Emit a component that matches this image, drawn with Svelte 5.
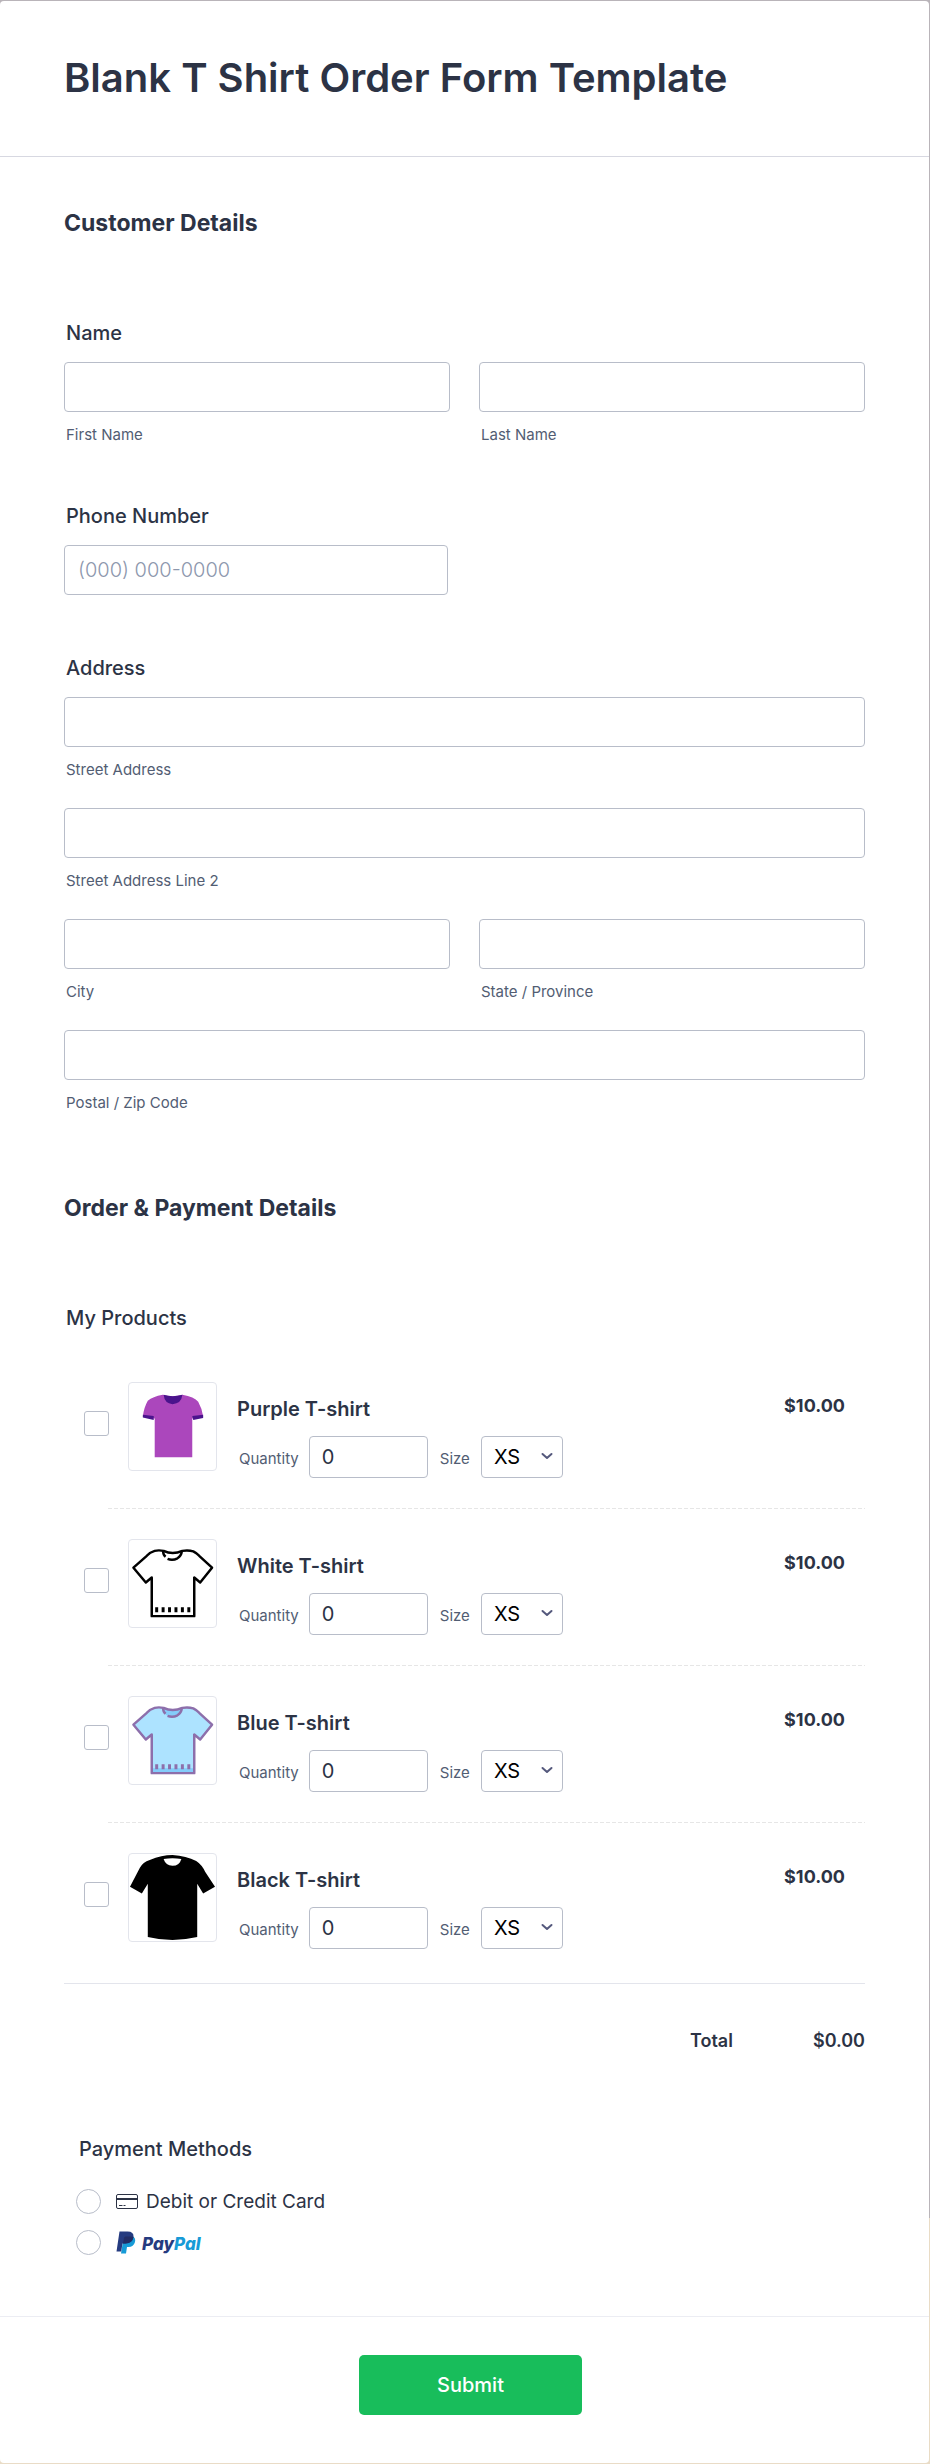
<script>
    const sizes = ["XS", "S", "M", "L", "XL"];
    let products = $state([
        { id: "purple", name: "Purple T-shirt", price: 10, picked: false, qty: "0", size: "XS" },
        { id: "white", name: "White T-shirt", price: 10, picked: false, qty: "0", size: "XS" },
        { id: "blue", name: "Blue T-shirt", price: 10, picked: false, qty: "0", size: "XS" },
        { id: "black", name: "Black T-shirt", price: 10, picked: false, qty: "0", size: "XS" }
    ]);
    let payment = $state("");

    let total = $derived(
        products.reduce((sum, p) => sum + (p.picked ? p.price * (Number(p.qty) || 0) : 0), 0)
    );

    function money(n) {
        return "$" + n.toFixed(2);
    }
</script>

{#snippet field(id, label)}
    <div class="field">
        <input class="box" type="text" {id}>
        <label class="sub" for={id}>{label}</label>
    </div>
{/snippet}

{#snippet outlineShirt(line, fill, shade)}
    <path d="M28 10.5 L35 11 Q44 16.5 54 11 L61 10.5 Q66 11 70 14 L84 28 L73 43 L66 38 V78 H23 V38 L16 43 L4 28 L20 14 Q24 10.5 28 10.5 Z" fill={fill} />
    <path d="M34 11 Q44 16 54 11 Q53 20 44 20.5 Q36 20 34 11 Z M23 72 H66 V78 H23 Z" fill={shade} />
    <g fill="none" stroke={line} stroke-width="2.5" stroke-linejoin="round">
        <path d="M26 11 Q30 10 35 11 Q44 15.5 54 11 Q60 10 65 11.5 Q69 13.5 71 16 L84 28 L72 43 L66 38 V77 H23 V38 L17 43 L4.5 28 L18 16 Q21 12.5 26 11 Z" />
        <path d="M34.5 11 Q34.5 15 37 17 M39 19 Q44 21 49 18.5 Q53 16 53.5 11" />
        <path stroke-width="3" d="M28 68 v5 M34.5 68 v5 M41 68 v5 M47.5 68 v5 M54 68 v5 M60.5 68 v5" />
    </g>
{/snippet}

<main class="card">
    <header>
        <h1>Blank T Shirt Order Form Template</h1>
    </header>

    <form onsubmit={(e) => e.preventDefault()}>
        <div class="content">
            <h2>Customer Details</h2>

            <fieldset>
                <legend>Name</legend>
                <div class="grid">
                    {@render field("first", "First Name")}
                    {@render field("last", "Last Name")}
                </div>
            </fieldset>

            <div class="group">
                <label class="title" for="phone">Phone Number</label>
                <input class="box phone" type="tel" id="phone" placeholder="(000) 000-0000">
            </div>

            <fieldset>
                <legend>Address</legend>
                <div class="grid">
                    <div class="wide">{@render field("street", "Street Address")}</div>
                    <div class="wide">{@render field("street2", "Street Address Line 2")}</div>
                    {@render field("city", "City")}
                    {@render field("state", "State / Province")}
                    <div class="wide">{@render field("zip", "Postal / Zip Code")}</div>
                </div>
            </fieldset>

            <h2 class="second">Order &amp; Payment Details</h2>

            <fieldset>
                <legend>My Products</legend>
                <ul class="products">
                    {#each products as p}
                        <li>
                            <div class="product">
                                <input class="tick" type="checkbox" id={p.id} bind:checked={p.picked}>
                                <svg class="thumb" viewBox="0 0 88 88" aria-hidden="true">
                                    {#if p.id === "purple"}
                                        <path d="M34 12 Q44 15 54 12 Q66 14 70 19 Q74 26 75 34 L64 36 V75 H26 V36 L14 34 Q15 25 19 18 Q24 14 34 12 Z" fill="#ab47bc" />
                                        <path d="M35 12 Q44 15 54 12 Q53 21 44 21.5 Q36 21 35 12 Z M14 32 L25 33.5 V37.5 L14 35 Z M64 33.5 L75 32 V35.5 L65 37.5 Z" fill="#4a148c" />
                                    {:else if p.id === "white"}
                                        {@render outlineShirt("#000", "#fff", "#fff")}
                                    {:else if p.id === "blue"}
                                        {@render outlineShirt("#8d6fab", "#ade3ff", "#84ccfa")}
                                    {:else}
                                        <path d="M44 1 Q58 2 68 7 Q74 11 77 18 L87 33 L75 40 L69 30 V84 Q56 87 44 87 Q31 87 19 84 V30 L13 40 L1 33 L11 14 Q14 8 21 6 Q33 1 44 1 Z" fill="#000" />
                                        <path d="M35 5 Q44 3.5 53 5 Q51 12 44 12 Q37 11.5 35 5 Z" fill="#fff" />
                                    {/if}
                                </svg>
                                <div class="info">
                                    <label class="name" for={p.id}>{p.name}</label>
                                    <div class="options">
                                        <label for="{p.id}-qty">Quantity</label>
                                        <input class="qty" type="text" inputmode="numeric" id="{p.id}-qty" bind:value={p.qty}>
                                        <label for="{p.id}-size">Size</label>
                                        <div class="select">
                                            <select id="{p.id}-size" bind:value={p.size}>
                                                {#each sizes as s}
                                                    <option value={s}>{s}</option>
                                                {/each}
                                            </select>
                                            <svg viewBox="0 0 12 8" aria-hidden="true"><path d="M1.5 2 L6 6 L10.5 2" fill="none" stroke="#55597d" stroke-width="2" stroke-linecap="round" stroke-linejoin="round" /></svg>
                                        </div>
                                    </div>
                                </div>
                                <span class="price">{money(p.price)}</span>
                            </div>
                        </li>
                    {/each}
                </ul>
                <div class="total">
                    <span>Total</span>
                    <span>{money(total)}</span>
                </div>
            </fieldset>

            <fieldset class="payment">
                <legend>Payment Methods</legend>
                <label class="method">
                    <input type="radio" name="payment" value="card" bind:group={payment}>
                    <svg class="cardicon" viewBox="0 0 22 15" aria-hidden="true">
                        <rect x="0.5" y="0.5" width="21" height="14" rx="1.5" fill="#fff" stroke="#2c3345" />
                        <path d="M0.5 5 H21.5" stroke="#2c3345" stroke-width="2" />
                        <path d="M3 11.5 H6.5 M7.5 11.5 H9.5" stroke="#2c3345" />
                    </svg>
                    <span>Debit or Credit Card</span>
                </label>
                <label class="method">
                    <input type="radio" name="payment" value="paypal" bind:group={payment}>
                    <svg class="ppicon" viewBox="0 0 20 23" aria-hidden="true">
                        <path d="M16.5 5 Q20 7 19 11 Q17.5 16 12.5 16 H11 L10 22.5 H5 L7.5 7 Z" fill="#179bd7" />
                        <path d="M3.5 0.5 H11.5 Q18 0.5 17.500 6 Q16.500 12 9.500 12.500 H6.500 L5.200 20.500 H0.500 Z" fill="#253b80" />
                        <path d="M8 7 Q8.2 5.500 9.500 5.500 H14 Q16.500 5.500 17.500 6 Q16.500 12 9.500 12.500 H7 Z" fill="#222d65" />
                    </svg>
                    <span class="paypal">Pay<span>Pal</span></span>
                </label>
            </fieldset>
        </div>

        <footer>
            <button type="submit">Submit</button>
        </footer>
    </form>
</main>

<style>
    :global(body) {
        background: linear-gradient(#b9b4b9 90%, #e9dcc6 90%);
        font-family: Inter, "Liberation Sans", sans-serif;
        color: #2c3345;
    }

    * {
        box-sizing: border-box;
    }

    input, select, button {
        font-family: inherit;
        margin: 0;
    }

    .card {
        margin: 1px 1px 1px 0;
        background: #fff;
        border-radius: 4px;
    }

    header {
        padding: 53px 64px 54px;
        border-bottom: 1px solid #d7d8e1;
    }
    h1 {
        margin: 0;
        font-size: 40px;
        line-height: 48px;
        font-weight: 600;
    }

    .content {
        padding: 50px 64px 61px;
    }
    h2 {
        margin: 0 0 82px;
        font-size: 23px;
        line-height: 32px;
        font-weight: 700;
    }
    h2.second {
        margin-top: 80px;
    }

    fieldset {
        margin: 0;
        padding: 0;
        border: 0;
        min-width: 0;
    }
    legend, .title {
        display: block;
        padding: 0 2px;
        margin-bottom: 17px;
        font-size: 20px;
        line-height: 24px;
        font-weight: 500;
    }
    .group {
        margin: 60px 0 61px;
    }

    .grid {
        display: grid;
        grid-template-columns: 1fr 1fr;
        gap: 29px;
    }
    .wide {
        grid-column: 1 / -1;
    }
    .box {
        display: block;
        width: 100%;
        height: 50px;
        padding: 0 13px;
        border: 1px solid #b8bdc9;
        border-radius: 4px;
        background: #fff;
        font-size: 20px;
        color: #2c3345;
    }
    .phone {
        width: 48%;
        font-weight: 300;
    }
    .box::placeholder {
        color: #8d97ad;
        opacity: 1;
    }
    .sub {
        display: block;
        margin-top: 14px;
        padding-left: 2px;
        font-size: 15px;
        line-height: 18px;
        color: #525d73;
    }

    .products {
        margin: 5px 0 0;
        padding: 0 0 4px;
        list-style: none;
        border-bottom: 1px solid #e3e5ec;
    }
    .products li:not(:last-child)::after {
        content: "";
        display: block;
        height: 1px;
        margin-left: 44px;
        background: repeating-linear-gradient(90deg, #e6e6e6 0 4px, transparent 4px 6px);
    }
    .product {
        display: flex;
        align-items: flex-start;
        padding: 30px 20px;
    }
    .tick, .method input {
        appearance: none;
        flex: none;
        width: 25px;
        height: 25px;
        border: 1px solid #b8bdc9;
        border-radius: 3px;
        background: #fff;
    }
    .tick {
        margin: 29px 19px 0 0;
    }
    .tick:checked, .method input:checked {
        background: #2e69ff;
    }
    .thumb {
        flex: none;
        width: 89px;
        height: 89px;
        border: 1px solid #e3e5ec;
        border-radius: 4px;
    }
    .info {
        flex: 1;
        padding: 15px 0 0 20px;
    }
    .name {
        display: block;
        font-size: 20px;
        line-height: 24px;
        font-weight: 600;
    }
    .options {
        display: flex;
        align-items: center;
        margin-top: 15px;
        padding-left: 2px;
        font-size: 15px;
        line-height: 18px;
        color: #525d73;
    }
    .options label {
        padding-top: 3px;
    }
    .qty, select {
        height: 42px;
        padding: 0 12px;
        border: 1px solid #b8bdc9;
        border-radius: 4px;
        background: #fff;
        font-size: 20px;
    }
    .qty {
        width: 119px;
        margin: 0 12px 0 10px;
        color: #2c3345;
    }
    .select {
        position: relative;
        margin-left: 11px;
    }
    select {
        appearance: none;
        width: 82px;
        color: #000;
    }
    .select svg {
        position: absolute;
        top: 16px;
        right: 10px;
        width: 12px;
        height: 8px;
        pointer-events: none;
    }
    .price {
        padding-top: 12px;
        font-size: 18px;
        line-height: 24px;
        font-weight: 700;
    }
    .total {
        display: flex;
        justify-content: flex-end;
        gap: 80px;
        margin-top: 45px;
        font-size: 18px;
        line-height: 24px;
        font-weight: 600;
    }

    .payment {
        margin-top: 84px;
        padding-left: 12px;
    }
    .payment legend {
        margin-bottom: 28px;
        padding-left: 3px;
    }
    .method {
        display: flex;
        align-items: center;
        height: 25px;
        font-size: 19px;
        line-height: 24px;
    }
    .method + .method {
        margin-top: 16px;
    }
    .method input {
        margin-right: 15px;
        border-radius: 50%;
    }
    .cardicon {
        width: 22px;
        height: 15px;
        margin-right: 8px;
    }
    .ppicon {
        width: 20px;
        height: 23px;
        margin-right: 6px;
    }
    .paypal {
        padding-top: 2px;
        font-size: 17px;
        font-weight: 800;
        font-style: italic;
        color: #253b80;
    }
    .paypal span {
        color: #179bd7;
    }

    footer {
        display: flex;
        justify-content: center;
        padding: 38px 0 48px 12px;
        border-top: 1px solid #ecedf3;
    }
    button {
        width: 223px;
        height: 60px;
        border: 0;
        border-radius: 5px;
        background: #18bd5b;
        color: #fff;
        font-size: 20px;
        font-weight: 500;
        cursor: pointer;
    }
</style>
